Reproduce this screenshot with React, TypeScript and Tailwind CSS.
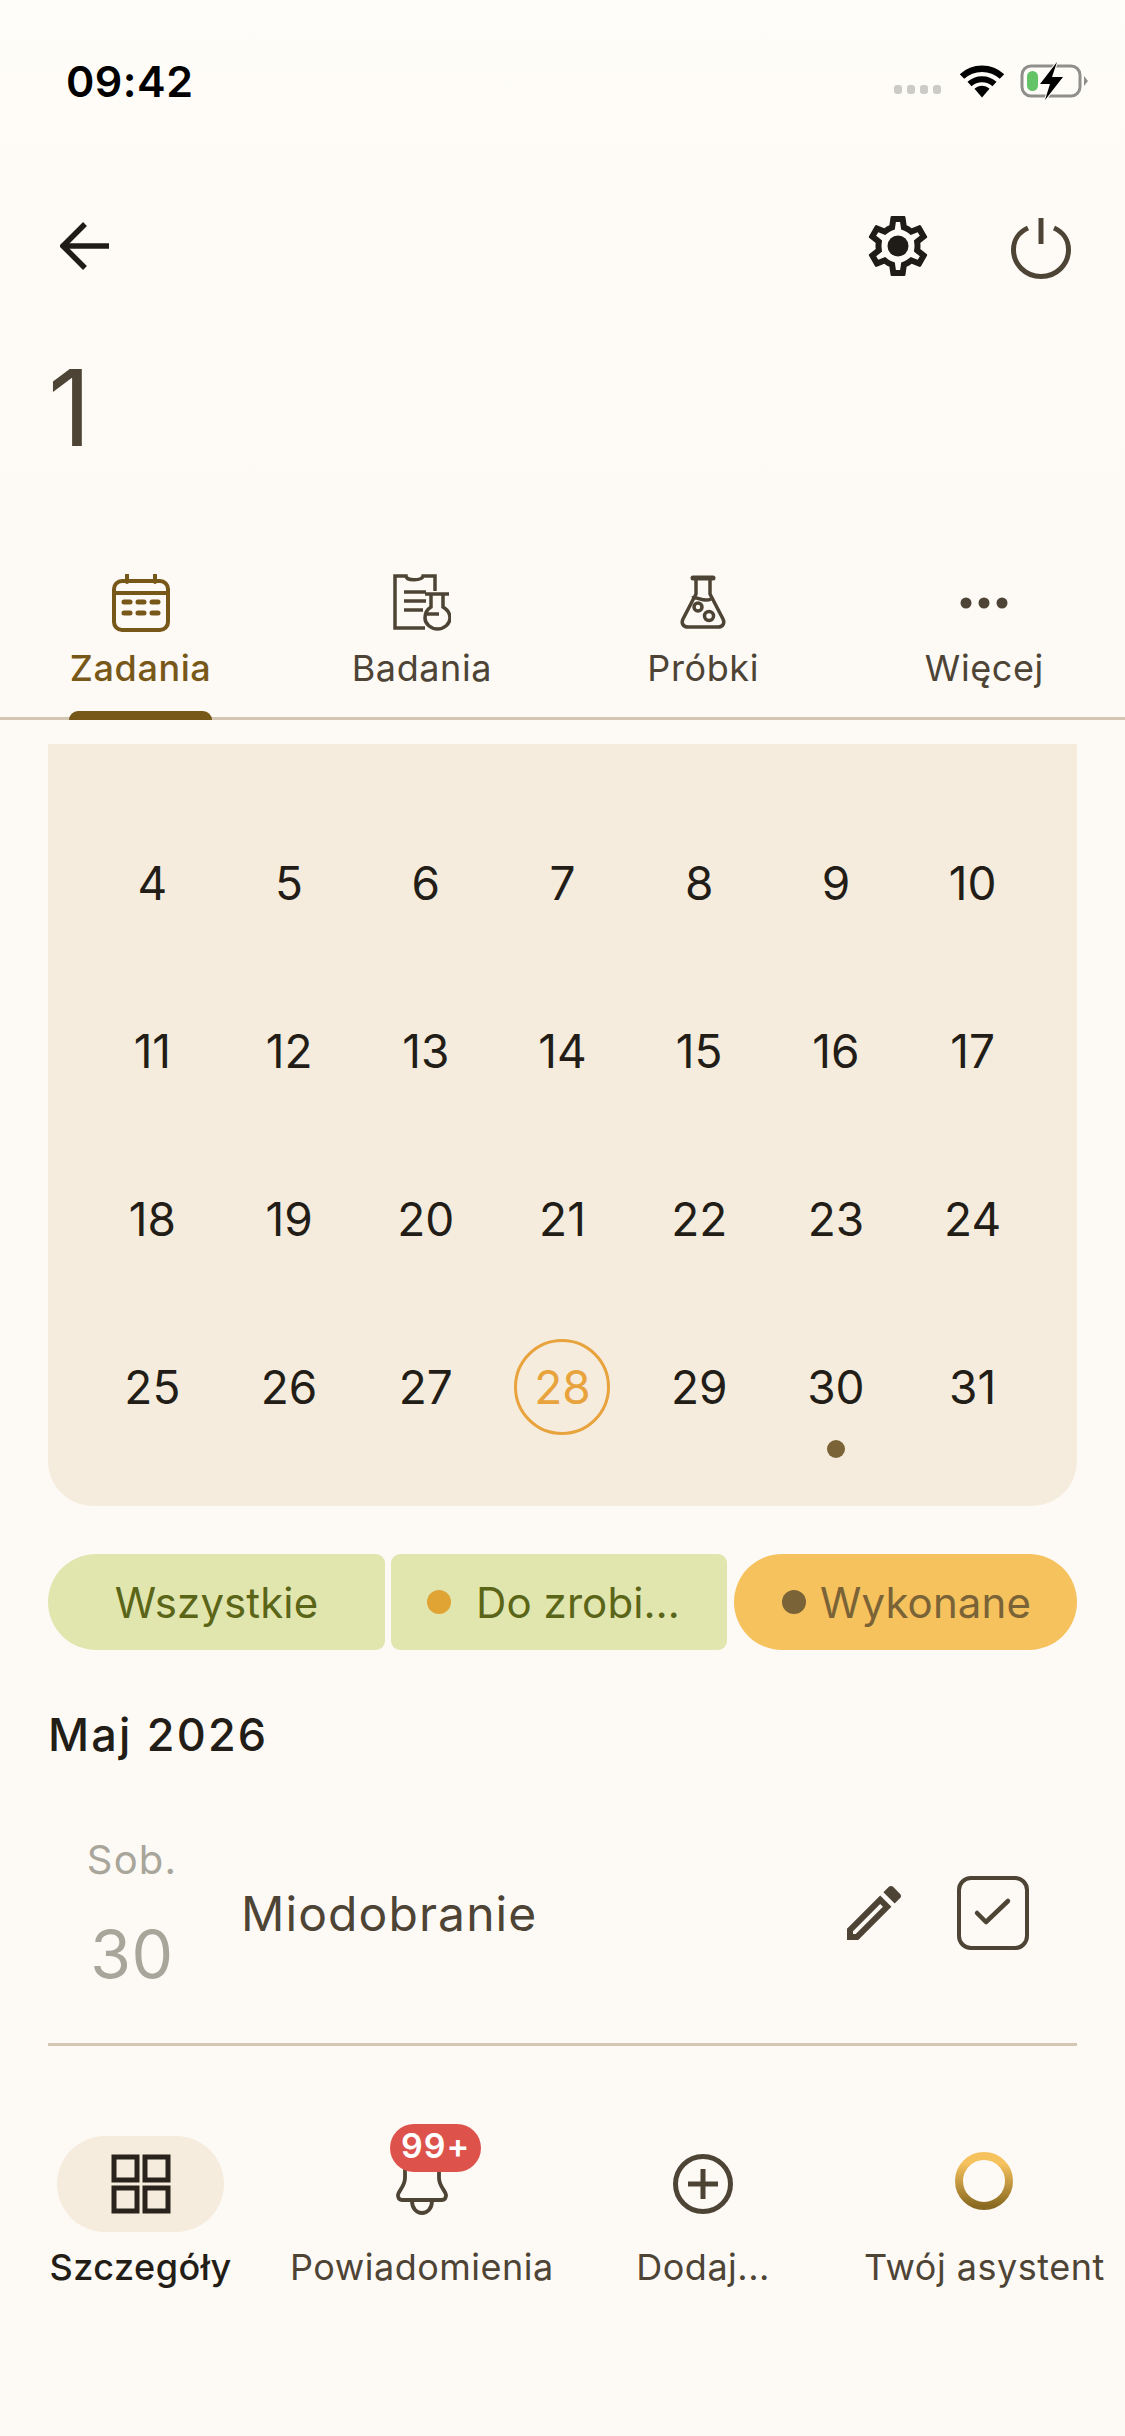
import React from "react";

const ROWS = [
  [4, 5, 6, 7, 8, 9, 10],
  [11, 12, 13, 14, 15, 16, 17],
  [18, 19, 20, 21, 22, 23, 24],
  [25, 26, 27, 28, 29, 30, 31],
];

function Wifi() {
  return (
    <svg width="46" height="34" viewBox="0 0 46 34" fill="none">
      <path d="M3 12.5C14 2 32 2 43 12.5" stroke="#000" strokeWidth="6.5" />
      <path d="M10.5 20C17.5 13.5 28.500 13.500 35.500 20" stroke="#000" strokeWidth="6" />
      <path d="M15.500 24.800C19.800 20.800 26.200 20.800 30.500 24.800L23 33.500Z" fill="#000" />
    </svg>
  );
}

function Battery() {
  return (
    <svg width="70" height="38" viewBox="0 0 70 38" fill="none">
      <rect x="2" y="4" width="58" height="30" rx="9" stroke="#8f8f8c" strokeWidth="3" />
      <rect x="7" y="9" width="11" height="20" rx="5.5" fill="#62c466" />
      <path d="M64 14l4 5-4 5z" fill="#8f8f8c" />
      <path d="M37 0L20 22H30L25 38L43 15H32Z" fill="#000" stroke="#fdfbf8" strokeWidth="2" paintOrder="stroke" />
    </svg>
  );
}

function StatusBar() {
  return (
    <div className="h-[186px] flex items-start justify-between pl-[66px] pr-[35px] pt-[58px]">
      <span className="text-[43px] leading-[46px] font-semibold text-black tracking-[0.5px]">09:42</span>
      <div className="flex items-center pt-[3px] h-[42px]">
        <div className="flex gap-[5px] mt-[18px] mr-[18px]">
          <span className="w-[8px] h-[9px] rounded-[3px] bg-[#cdcbc7]" />
          <span className="w-[8px] h-[9px] rounded-[3px] bg-[#cdcbc7]" />
          <span className="w-[8px] h-[9px] rounded-[3px] bg-[#cdcbc7]" />
          <span className="w-[8px] h-[9px] rounded-[3px] bg-[#cdcbc7]" />
        </div>
        <Wifi />
        <div className="ml-[15px]">
          <Battery />
        </div>
      </div>
    </div>
  );
}

function Toolbar() {
  return (
    <div className="h-[120px] flex items-center pl-[60px] pr-[54px]">
      <svg width="50" height="48" viewBox="0 0 50 48" fill="none" stroke="#1f1b16" strokeWidth="5.5">
        <path d="M49 24H5" />
        <path d="M25 2L3 24L25 46" />
      </svg>
      <div className="flex-1" />
      <svg width="72" height="72" viewBox="0 0 24 24" fill="#1f1b16" className="mr-[77px]">
        <path d="M19.43 12.98c.04-.32.07-.64.07-.98 0-.34-.03-.66-.07-.98l2.11-1.65c.19-.15.24-.42.12-.64l-2-3.46c-.09-.16-.26-.25-.44-.25-.06 0-.12.01-.17.03l-2.49 1c-.52-.4-1.08-.73-1.69-.98l-.38-2.65C14.46 2.18 14.25 2 14 2h-4c-.25 0-.46.18-.49.42l-.38 2.65c-.61.25-1.17.59-1.69.98l-2.49-1c-.06-.02-.12-.03-.18-.03-.17 0-.34.09-.43.25l-2 3.46c-.13.22-.07.49.12.64l2.11 1.65c-.04.32-.07.65-.07.98 0 .33.03.66.07.98l-2.11 1.65c-.19.15-.24.42-.12.64l2 3.46c.09.16.26.25.44.25.06 0 .12-.01.17-.03l2.49-1c.52.4 1.08.73 1.69.98l.38 2.65c.03.24.24.42.49.42h4c.25 0 .46-.18.49-.42l.38-2.65c.61-.25 1.17-.59 1.69-.98l2.49 1c.06.02.12.03.18.03.17 0 .34-.09.43-.25l2-3.46c.12-.22.07-.49-.12-.64l-2.11-1.65zm-1.98-1.71c.04.31.05.52.05.73 0 .21-.02.43-.05.73l-.14 1.13.89.7 1.08.84-.7 1.21-1.27-.51-1.04-.42-.9.68c-.43.32-.84.56-1.25.73l-1.06.43-.16 1.13-.2 1.35h-1.4l-.19-1.35-.16-1.13-1.06-.43c-.43-.18-.83-.41-1.23-.71l-.91-.7-1.06.43-1.27.51-.7-1.21 1.08-.84.89-.7-.14-1.13c-.03-.31-.05-.54-.05-.74s.02-.43.05-.73l.14-1.13-.89-.7-1.08-.84.7-1.21 1.27.51 1.04.42.9-.68c.43-.32.84-.56 1.25-.73l1.06-.43.16-1.13.2-1.35h1.39l.19 1.35.16 1.13 1.06.43c.43.18.83.41 1.23.71l.91.7 1.06-.43 1.27-.51.7 1.21-1.07.85-.89.7.14 1.13z" />
        <circle cx="12" cy="12" r="3.5" />
      </svg>
      <svg width="60" height="62" viewBox="0 0 60 62" fill="none" stroke="#4e4435" strokeWidth="5" className="mt-[3px]">
        <path d="M30 1V27" />
        <path d="M17 11C7 15.500 2.500 24 2.500 32.500C2.500 47.500 14.500 59.500 30 59.500C45.500 59.500 57.500 47.500 57.500 32.500C57.500 24 53 15.500 43 11" />
      </svg>
    </div>
  );
}

function CalendarIcon() {
  return (
    <svg width="58" height="58" viewBox="0 0 58 58" fill="none" stroke="#785819" strokeWidth="4">
      <rect x="2" y="7" width="54" height="49" rx="8" />
      <path d="M15 1V8M43 1V8M2 19H56" strokeLinecap="round" />
      <path d="M12 28H18M26 28H32M40 28H46M12 39H18M26 39H32M40 39H46" strokeWidth="5" strokeLinecap="round" />
    </svg>
  );
}

function ReportIcon() {
  return (
    <svg width="58" height="58" viewBox="0 0 58 58" fill="none" stroke="#4e4435" strokeWidth="3.500">
      <path d="M32 54H2V2H13C13 7 29 7 30 2H42V17" />
      <path d="M11 18H33M11 27H33M11 36H30" />
      <path d="M32 20H56M38 20V33C33 36 32 40 32 44C32 50 38 55 44.500 55C51 55 57 50 57 44C57 40 55 36 50 33V20" />
      <path d="M33 40H46" />
    </svg>
  );
}

function FlaskIcon() {
  return (
    <svg width="58" height="58" viewBox="0 0 58 58" fill="none" stroke="#4e4435" strokeWidth="3.500">
      <path d="M19 4H39" strokeWidth="5" strokeLinecap="round" />
      <path d="M22 5V20L9 45C7 49 9 53 14 53H44C49 53 51 49 49 45L36 20V5" strokeLinejoin="round" />
      <path d="M18 24C24 22 29 29 37 25" />
      <circle cx="24" cy="33" r="4" />
      <circle cx="35" cy="42" r="4.500" />
    </svg>
  );
}

function MoreIcon() {
  return (
    <svg width="58" height="58" viewBox="0 0 58 58" fill="#4e4435">
      <circle cx="11" cy="29" r="5.500" />
      <circle cx="29" cy="29" r="5.500" />
      <circle cx="47" cy="29" r="5.500" />
    </svg>
  );
}

function Tab({ icon, label, active }: { icon: React.ReactNode; label: string; active?: boolean }) {
  return (
    <div className="relative flex flex-col items-center pt-[17px]">
      {icon}
      <span className={`mt-[15px] text-[36px] leading-[42px] tracking-[0.6px] ${active ? "text-[#785819] font-medium" : "text-[#4e4435]"}`}>{label}</span>
      {active && <span className="absolute bottom-[-3px] left-[69px] w-[143px] h-[9px] rounded-t-[9px] bg-[#785819]" />}
    </div>
  );
}

function Tabs() {
  return (
    <div className="grid grid-cols-4 h-[163px] border-b-[3px] border-[#d3c6b2]">
      <Tab icon={<CalendarIcon />} label="Zadania" active />
      <Tab icon={<ReportIcon />} label="Badania" />
      <Tab icon={<FlaskIcon />} label="Próbki" />
      <Tab icon={<MoreIcon />} label="Więcej" />
    </div>
  );
}

function Calendar() {
  return (
    <div className="mx-[48px] mt-[24px] h-[762px] rounded-b-[45px] bg-[#f5ecdd] pt-[55px] px-[36px]">
      {ROWS.map((row, i) => (
        <div key={i} className="grid grid-cols-7 h-[168px]">
          {row.map((d) => (
            <div key={d} className="relative flex items-center justify-center">
              {d === 28 ? (
                <span className="w-[96px] h-[96px] rounded-full border-[3px] border-[#e8a33d] flex items-center justify-center text-[46px] text-[#e8a33d]">{d}</span>
              ) : (
                <span className="text-[46px] text-[#231d17]">{d}</span>
              )}
              {d === 30 && <span className="absolute left-[59px] top-[137px] w-[18px] h-[18px] rounded-full bg-[#7a6336]" />}
            </div>
          ))}
        </div>
      ))}
    </div>
  );
}

function Chips() {
  return (
    <div className="mx-[48px] mt-[48px] flex gap-[6px] h-[96px] text-[42px] tracking-[0.1px]">
      <div className="w-[337px] rounded-l-[48px] rounded-r-[9px] bg-[#e1e6af] text-[#5b6518] flex items-center justify-center">Wszystkie</div>
      <div className="w-[336px] rounded-[9px] bg-[#e1e6af] text-[#5b6518] flex items-center pl-[36px]">
        <span className="w-[24px] h-[24px] rounded-full bg-[#dfa434] mr-[25px]" />
        Do zrobi…
      </div>
      <div className="flex-1 ml-[1px] rounded-[48px] bg-[#f5c25e] text-[#7a6336] flex items-center pl-[48px]">
        <span className="w-[24px] h-[24px] rounded-full bg-[#7a6336] mr-[14px]" />
        Wykonane
      </div>
    </div>
  );
}

function EventRow() {
  return (
    <div className="mx-[48px] h-[284px] border-b-[3px] border-[#d3c6b2] relative flex items-start">
      <div className="w-[168px] flex flex-col items-center pt-[73px] text-[#a8a59a]">
        <span className="text-[40px] leading-[50px] tracking-[1.2px]">Sob.</span>
        <span className="text-[66px] leading-[78px] mt-[30px] tracking-[0.5px]">30</span>
      </div>
      <span className="ml-[25px] mt-[122px] text-[48px] leading-[60px] text-[#4e4435] tracking-[1.1px]">Miodobranie</span>
      <div className="flex-1" />
      <svg width="72" height="72" viewBox="0 0 24 24" fill="#4e4435" className="mt-[115px] mr-[47px]">
        <path d="M3 17.25V21h3.75L17.81 9.94l-3.75-3.75L3 17.25zM5.92 19H5v-.92l9.06-9.06.92.92L5.92 19zM20.71 7.04c.39-.39.39-1.02 0-1.41l-2.34-2.34c-.2-.2-.45-.29-.71-.29s-.51.09-.7.29l-1.83 1.83 3.75 3.75 1.83-1.83z" />
      </svg>
      <svg width="72" height="74" viewBox="0 0 72 74" fill="none" stroke="#4e4435" strokeWidth="4" className="mt-[114px] mr-[48px]">
        <rect x="2" y="2" width="68" height="70" rx="12" />
        <path d="M20 37L29 46L51 25" strokeWidth="4.500" strokeLinecap="round" strokeLinejoin="round" />
      </svg>
    </div>
  );
}

function NavItem({ icon, label, active, badge }: { icon: React.ReactNode; label: string; active?: boolean; badge?: boolean }) {
  return (
    <div className="relative flex flex-col items-center">
      <div className={`w-[167px] h-[96px] rounded-[48px] flex items-center justify-center ${active ? "bg-[#f5ecdd]" : ""}`}>{icon}</div>
      <span className={`mt-[14px] text-[36px] leading-[42px] tracking-[0.5px] whitespace-nowrap ${active ? "text-[#231d17] font-medium" : "text-[#4e4435]"}`}>{label}</span>
      {badge && (
        <span className="absolute left-[109px] top-[-12px] w-[91px] h-[48px] rounded-[24px] bg-[#de524c] text-white text-[34px] leading-[44px] font-semibold text-center tracking-[1px]">99+</span>
      )}
    </div>
  );
}

function BottomNav() {
  return (
    <div className="grid grid-cols-4 mt-[90px]">
      <NavItem
        active
        label="Szczegóły"
        icon={
          <svg width="60" height="60" viewBox="0 0 60 60" fill="none" stroke="#2a221c" strokeWidth="5">
            <rect x="3" y="3" width="23" height="23" />
            <rect x="34" y="3" width="23" height="23" />
            <rect x="3" y="34" width="23" height="23" />
            <rect x="34" y="34" width="23" height="23" />
          </svg>
        }
      />
      <NavItem
        badge
        label="Powiadomienia"
        icon={
          <svg width="56" height="54" viewBox="0 0 56 54" fill="none" stroke="#4e4435" strokeWidth="3.800" className="self-start mt-[26px]">
            <path d="M11 0V16C11 25 3 30 4 34C4.500 37 6 38 8 38H48C50 38 51.500 37 52 34C53 30 45 25 45 16V0" strokeLinejoin="round" />
            <path d="M18 39C18 47 23 51 28 51C33 51 38 47 38 39" />
          </svg>
        }
      />
      <NavItem
        label="Dodaj..."
        icon={
          <svg width="60" height="60" viewBox="0 0 60 60" fill="none" stroke="#4e4435" strokeWidth="5">
            <circle cx="30" cy="30" r="27.500" />
            <path d="M15 30H45M30 15V45" />
          </svg>
        }
      />
      <NavItem
        label="Twój asystent"
        icon={
          <svg width="60" height="60" viewBox="0 0 60 60" fill="none" className="mb-[6px]">
            <defs>
              <linearGradient id="ring" x1="0" y1="0" x2="0" y2="1">
                <stop offset="0.150" stopColor="#f5c25e" />
                <stop offset="1" stopColor="#8a6a20" />
              </linearGradient>
            </defs>
            <circle cx="30" cy="30" r="25" stroke="url(#ring)" strokeWidth="8" />
          </svg>
        }
      />
    </div>
  );
}

export default function App() {
  return (
    <div className="w-[1125px] h-[2436px] overflow-hidden bg-gradient-to-b from-[#fffdf9] to-[#fdf9f5] to-[20%] font-['Inter',sans-serif]">
      <StatusBar />
      <Toolbar />
      <div className="h-[251px] pl-[48px] pt-[42px] text-[106px] leading-[120px] text-[#4e4435]">1</div>
      <Tabs />
      <Calendar />
      <Chips />
      <div className="mx-[48px] mt-[58px] h-[54px] text-[45px] leading-[54px] font-medium text-[#231d17] tracking-[2.2px]">Maj 2026</div>
      <EventRow />
      <BottomNav />
    </div>
  );
}
